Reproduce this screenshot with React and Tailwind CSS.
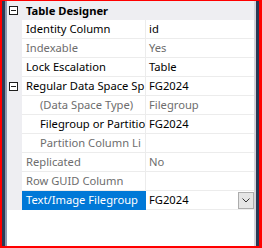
const rows = [
  { label: "Identity Column", value: "id" },
  { label: "Indexable", value: "Yes", dim: true },
  { label: "Lock Escalation", value: "Table" },
  { label: "Regular Data Space Sp", value: "FG2024", toggle: true },
  { label: "(Data Space Type)", value: "Filegroup", dim: true, indent: true },
  { label: "Filegroup or Partitio", value: "FG2024", indent: true },
  { label: "Partition Column Li", value: "", dim: true, indent: true },
  { label: "Replicated", value: "No", dim: true },
  { label: "Row GUID Column", value: "", dim: true },
  { label: "Text/Image Filegroup", value: "FG2024", selected: true, dropdown: true },
];

function MinusBox() {
  return (
    <span className="flex h-[9px] w-[9px] items-center justify-center border border-[#1e1e1e] bg-white">
      <span className="h-px w-[5px] bg-[#1e1e1e]" />
    </span>
  );
}

function Row({ row }) {
  return (
    <div className="flex h-[19px]">
      <div className="flex w-[15px] shrink-0 items-center bg-[#eeeef2]">
        {row.toggle ? (
          <span className="ml-[2px]">
            <MinusBox />
          </span>
        ) : null}
      </div>
      <div
        className={
          row.selected
            ? "flex w-[124px] shrink-0 items-center overflow-hidden whitespace-nowrap border-b border-r border-[#0078d7] bg-[#0078d7] pl-[4px] text-white"
            : `flex w-[124px] shrink-0 items-center overflow-hidden whitespace-nowrap border-b border-r border-[#ececec] ${
                row.indent ? "pl-[18px]" : "pl-[4px]"
              } ${row.dim ? "text-[#6d6d6d]" : "text-black"}`
        }
      >
        {row.label}
      </div>
      <div
        className={`flex min-w-0 flex-1 items-center justify-between whitespace-nowrap border-b border-[#ececec] pl-[3px] ${
          row.dim ? "text-[#6d6d6d]" : "text-black"
        }`}
      >
        <span>{row.value}</span>
        {row.dropdown ? (
          <span className="flex h-[17px] w-[16px] items-center justify-center border border-[#acacac] bg-[#e5e5e5]">
            <svg width="8" height="5" viewBox="0 0 8 5">
              <path d="M0.5 0.5 L4 4 L7.5 0.5" fill="none" stroke="#333" strokeWidth="1" />
            </svg>
          </span>
        ) : null}
      </div>
    </div>
  );
}

export default function App() {
  return (
    <div
      className="flex h-[248px] w-[262px] border-b-2 border-l-2 border-r-[3px] border-t border-[#ff0000] bg-white text-[11.2px] leading-none"
      style={{ fontFamily: '"Noto Sans", "Open Sans", sans-serif' }}
    >
      <div className="w-[3px] shrink-0 bg-[#2b3a55]" />
      <div className="w-[2px] shrink-0 bg-[#8e9ab0]" />
      <div className="flex min-w-0 flex-1 flex-col">
        <div className="flex h-[19px] items-center bg-[#eeeef2]">
          <span className="ml-[2px]">
            <MinusBox />
          </span>
          <span className="ml-[8px] font-bold text-black">Table Designer</span>
        </div>
        {rows.map((row) => (
          <Row key={row.label} row={row} />
        ))}
      </div>
      <div className="w-[2px] shrink-0 bg-[#d6d6dc]" />
      <div className="w-[3px] shrink-0 bg-[#2b3a55]" />
    </div>
  );
}
